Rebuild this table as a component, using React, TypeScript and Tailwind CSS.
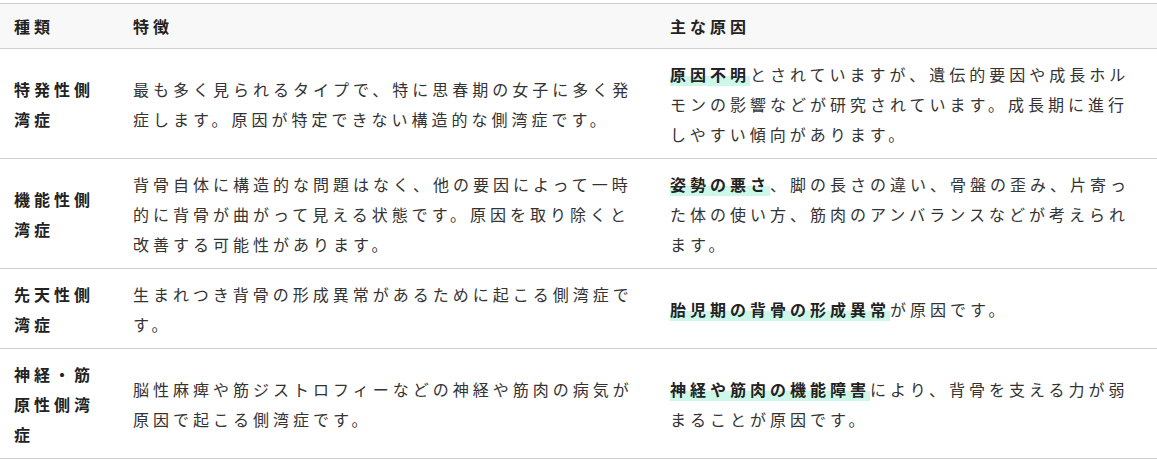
const rows = [
  {
    name: '特発性側湾症',
    feature: '最も多く見られるタイプで、特に思春期の女子に多く発症します。原因が特定できない構造的な側湾症です。',
    mark: '原因不明',
    cause: 'とされていますが、遺伝的要因や成長ホルモンの影響などが研究されています。成長期に進行しやすい傾向があります。',
  },
  {
    name: '機能性側湾症',
    feature: '背骨自体に構造的な問題はなく、他の要因によって一時的に背骨が曲がって見える状態です。原因を取り除くと改善する可能性があります。',
    mark: '姿勢の悪さ',
    cause: '、脚の長さの違い、骨盤の歪み、片寄った体の使い方、筋肉のアンバランスなどが考えられます。',
  },
  {
    name: '先天性側湾症',
    feature: '生まれつき背骨の形成異常があるために起こる側湾症です。',
    mark: '胎児期の背骨の形成異常',
    cause: 'が原因です。',
  },
  {
    name: '神経・筋原性側湾症',
    feature: '脳性麻痺や筋ジストロフィーなどの神経や筋肉の病気が原因で起こる側湾症です。',
    mark: '神経や筋肉の機能障害',
    cause: 'により、背骨を支える力が弱まることが原因です。',
  },
];

export default function App() {
  return (
    <div className="min-h-screen bg-white pt-[3px] font-['Noto_Sans_CJK_JP','Noto_Sans',sans-serif] text-[16px] tracking-[4px] text-[#333]">
      <table className="w-full table-fixed border-collapse">
        <colgroup>
          <col className="w-[119px]" />
          <col className="w-[537px]" />
          <col />
        </colgroup>
        <thead>
          <tr className="border-y border-[#cfcfcf] bg-[#f8f8f8]">
            <th className="px-[14px] py-[10px] text-left font-bold leading-[24px] text-[#222]">種類</th>
            <th className="px-[14px] py-[10px] text-left font-bold leading-[24px] text-[#222]">特徴</th>
            <th className="px-[14px] py-[10px] text-left font-bold leading-[24px] text-[#222]">主な原因</th>
          </tr>
        </thead>
        <tbody>
          {rows.map((row) => (
            <tr key={row.name} className="border-b border-[#cfcfcf]">
              <td className="px-[14px] py-[9.5px] align-middle font-bold leading-[30px] text-[#222]">{row.name}</td>
              <td className="px-[14px] py-[9.5px] align-middle leading-[30px]">{row.feature}</td>
              <td className="px-[14px] py-[9.5px] align-middle leading-[30px]">
                <strong className="bg-[linear-gradient(transparent_58%,#cdf7e8_58%)] font-bold text-[#222]">
                  {row.mark}
                </strong>
                {row.cause}
              </td>
            </tr>
          ))}
        </tbody>
      </table>
    </div>
  );
}
